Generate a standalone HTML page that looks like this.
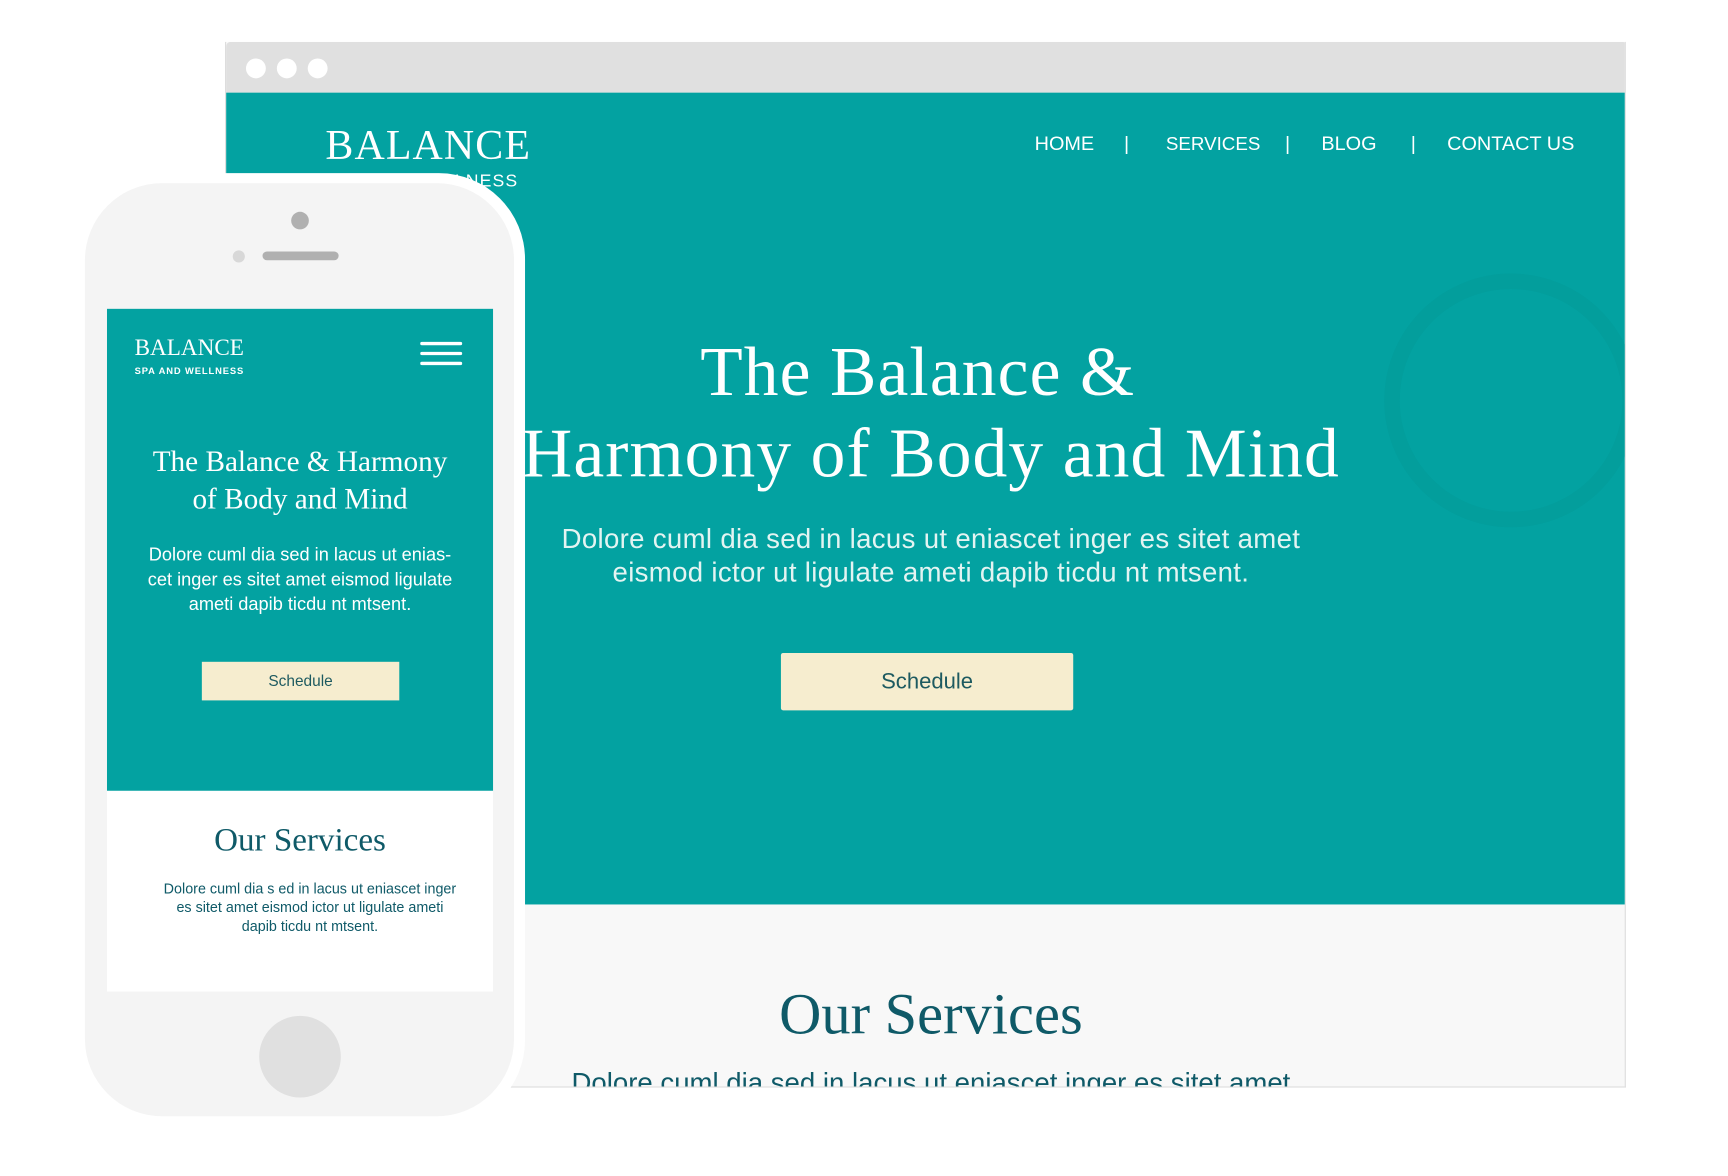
<!DOCTYPE html>
<html><head><meta charset="utf-8"><style>
*{margin:0;padding:0;box-sizing:border-box}
html,body{width:1728px;height:1176px;overflow:hidden;background:#fff}
#s{position:absolute;left:0;top:0;width:1552px;height:1056px;transform:scale(1.103);transform-origin:0 0}
.a{position:absolute}
.serif{font-family:"Liberation Serif","DejaVu Serif",serif}
.sans{font-family:"Liberation Sans","DejaVu Sans",sans-serif}
.c{text-align:center;white-space:nowrap}
.n{position:absolute;top:82px;font-size:18px;color:#fff;font-family:"Liberation Sans",sans-serif;white-space:nowrap}
</style></head><body><div id="s">
<!-- browser -->
<div class="a" style="left:204px;top:38px;width:1270px;height:948px;background:#f8f8f8;border:1px solid #ddd;border-top:none;overflow:hidden">
  <div class="a" style="left:0;top:0;width:1270px;height:46px;background:#e0e0e0;border-radius:4px 4px 0 0"></div>
  <div class="a" style="left:18px;top:15px;width:18px;height:18px;border-radius:50%;background:#fff"></div>
  <div class="a" style="left:46px;top:15px;width:18px;height:18px;border-radius:50%;background:#fff"></div>
  <div class="a" style="left:74px;top:15px;width:18px;height:18px;border-radius:50%;background:#fff"></div>
  <div class="a" style="left:0;top:46px;width:1270px;height:736px;background:#03a2a1"></div>
  <div class="a" style="left:1050px;top:210px;width:230px;height:230px;border-radius:50%;border:14px solid #049998;opacity:.5"></div>
  <div class="a serif" style="left:90px;top:72px;font-size:38px;color:#fff;letter-spacing:1px">BALANCE</div>
  <div class="a sans" style="left:90px;top:118px;font-size:16px;color:#fff;letter-spacing:1px">SPA AND WELLNESS</div>
  <div class="n" style="left:733px">HOME</div>
  <div class="n" style="left:814px">|</div>
  <div class="n" style="left:852px;font-size:17px;top:83px">SERVICES</div>
  <div class="n" style="left:960px">|</div>
  <div class="n" style="left:993px">BLOG</div>
  <div class="n" style="left:1074px">|</div>
  <div class="n" style="left:1107px">CONTACT US</div>
  <div class="a serif c" style="left:127px;width:1000px;top:262px;font-size:63px;line-height:74px;color:#fff;letter-spacing:1px">The Balance &amp;</div>
  <div class="a serif c" style="left:139px;width:1000px;top:336px;font-size:63px;line-height:74px;color:#fff;letter-spacing:1px">Harmony of Body and Mind</div>
  <div class="a sans c" style="left:139px;width:1000px;top:436px;font-size:25px;line-height:30px;color:#e3f4f2;letter-spacing:.3px">Dolore cuml dia sed in lacus ut eniascet inger es sitet amet<br>eismod ictor ut ligulate ameti dapib ticdu nt mtsent.</div>
  <div class="a sans c" style="left:503px;top:554px;width:265px;height:52px;background:#f6edcf;border-radius:2px;font-size:20px;line-height:52px;color:#1d5a60">Schedule</div>
  <div class="a serif c" style="left:139px;width:1000px;top:852px;font-size:53px;color:#0f5a68">Our Services</div>
  <div class="a sans c" style="left:139px;width:1000px;top:930px;font-size:25px;color:#0f5a68">Dolore cuml dia sed in lacus ut eniascet inger es sitet amet</div>
</div>
<!-- phone -->
<div class="a" style="left:68px;top:157px;width:408px;height:864px;background:#fff;border-radius:78px"></div>
<div class="a" style="left:77px;top:166px;width:389px;height:846px;background:#f4f4f4;border-radius:70px"></div>
<div class="a" style="left:264px;top:192px;width:16px;height:16px;border-radius:50%;background:#b0b0b0"></div>
<div class="a" style="left:211px;top:227px;width:11px;height:11px;border-radius:50%;background:#d8d8d8"></div>
<div class="a" style="left:238px;top:228px;width:69px;height:8px;border-radius:4px;background:#b0b0b0"></div>
<div class="a" style="left:97px;top:280px;width:350px;height:437px;background:#03a2a1;overflow:hidden">
  <div class="a serif" style="left:25px;top:23px;font-size:21px;color:#fff">BALANCE</div>
  <div class="a sans" style="left:25px;top:51px;font-size:8.5px;color:#fff;letter-spacing:.8px;font-weight:bold">SPA AND WELLNESS</div>
  <div class="a" style="left:284px;top:30px;width:38px;height:3px;background:#fff;border-radius:2px"></div>
  <div class="a" style="left:284px;top:39px;width:38px;height:3px;background:#fff;border-radius:2px"></div>
  <div class="a" style="left:284px;top:48px;width:38px;height:3px;background:#fff;border-radius:2px"></div>
  <div class="a serif c" style="left:0;width:350px;top:121px;font-size:26.5px;line-height:34px;color:#fff">The Balance &amp; Harmony<br>of Body and Mind</div>
  <div class="a sans c" style="left:0;width:350px;top:212px;font-size:16.5px;line-height:22.5px;color:#fff">Dolore cuml dia sed in lacus ut enias-<br>cet inger es sitet amet eismod ligulate<br>ameti dapib ticdu nt mtsent.</div>
  <div class="a sans c" style="left:86px;top:320px;width:179px;height:35px;background:#f6edcf;font-size:14px;line-height:35px;color:#1d5a60">Schedule</div>
</div>
<div class="a" style="left:97px;top:717px;width:350px;height:182px;background:#fff">
  <div class="a serif c" style="left:0;width:350px;top:28px;font-size:30px;color:#0f5a68">Our Services</div>
  <div class="a sans c" style="left:9px;width:350px;top:80px;font-size:13px;line-height:17px;color:#0f5a68">Dolore cuml dia s ed in lacus ut eniascet inger<br>es sitet amet eismod ictor ut ligulate ameti<br>dapib ticdu nt mtsent.</div>
</div>
<div class="a" style="left:235px;top:921px;width:74px;height:74px;border-radius:50%;background:#e0e0e0"></div>
</div></body></html>
